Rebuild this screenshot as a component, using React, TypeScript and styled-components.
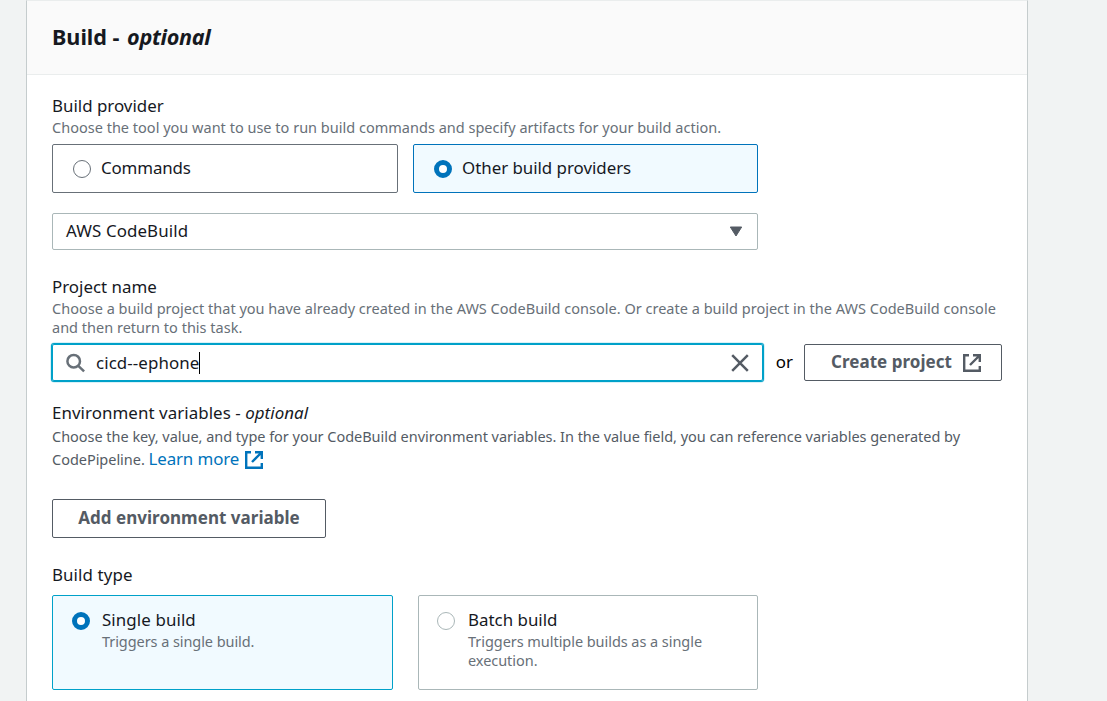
import React from "react";
import styled, { createGlobalStyle } from "styled-components";

const GlobalStyle = createGlobalStyle`
  *, *::before, *::after { box-sizing: border-box; }
  body {
    margin: 0;
    background: #f1f3f3;
    color: #16191f;
    font-family: "Noto Sans", "Open Sans", sans-serif;
    font-size: 16.9px;
    line-height: 23px;
  }
  button, input { font: inherit; color: inherit; }
`;

const Page = styled.main`
  height: 701px;
  overflow: hidden;
  padding: 0 79px 0 26px;
`;

const Container = styled.section`
  height: 760px;
  background: #ffffff;
  border: 1px solid #eaeded;
  border-left-color: #c5cccd;
  border-right-color: #c5cccd;
`;

const Header = styled.header`
  display: flex;
  align-items: center;
  height: 74px;
  padding: 0 25px 3px;
  background: #fafafa;
  border-bottom: 1px solid #eaeded;
`;

const Title = styled.h2`
  margin: 0;
  font-size: 21.6px;
  line-height: 29px;
  font-weight: 700;

  em {
    margin-left: 2px;
    letter-spacing: -0.3px;
  }
`;

const Body = styled.div`
  padding: 19px 25px 0;
`;

const Field = styled.section<{ $gap?: number }>`
  margin-top: ${(p) => p.$gap ?? 0}px;
`;

const Label = styled.div<{ $track?: number }>`
  letter-spacing: ${(p) => p.$track ?? 0}px;
`;

const Hint = styled.p<{ $track?: number }>`
  margin: 1px 0 0;
  font-size: 14.5px;
  line-height: 19px;
  color: #687078;
  letter-spacing: ${(p) => p.$track ?? 0.01}px;
`;

const Description = styled.p`
  margin: 0;
  padding-top: 1px;
  font-size: 14.5px;
  line-height: 23px;
  color: #545b64;
  letter-spacing: -0.03px;
`;

const Link = styled.a`
  display: inline-flex;
  align-items: center;
  gap: 6px;
  height: 21px;
  vertical-align: top;
  font-size: 16.9px;
  letter-spacing: -0.12px;
  color: #0073bb;
  text-decoration: none;

  svg {
    margin-top: 2px;
  }
`;

const ProviderTiles = styled.div`
  display: grid;
  grid-template-columns: 346px 345px;
  gap: 15px;
  margin-top: 7px;
`;

const BuildTypeTiles = styled.div`
  display: grid;
  grid-template-columns: 341px 340px;
  gap: 25px;
  margin-top: 9px;
`;

const Tile = styled.label<{ $height: number; $gap: number; $line: string; $selected?: boolean; $inset: string }>`
  display: flex;
  align-items: flex-start;
  gap: ${(p) => p.$gap}px;
  height: ${(p) => p.$height}px;
  padding: ${(p) => p.$inset};
  border: 1px solid ${(p) => p.$line};
  border-radius: 2px;
  background: ${(p) => (p.$selected ? "#f1faff" : "#ffffff")};
`;

const TileText = styled.div`
  flex: 1;
`;

const Radio = styled.span<{ $checked?: boolean; $line?: string }>`
  flex: none;
  width: 18px;
  height: 18px;
  margin-top: 4px;
  border-radius: 50%;
  background: #ffffff;
  border: ${(p) => (p.$checked ? "5.5px solid #0073bb" : `1.25px solid ${p.$line}`)};
`;

const Select = styled.div`
  display: flex;
  align-items: center;
  justify-content: space-between;
  width: 706px;
  height: 37px;
  margin-top: 20px;
  padding: 0 14px 2px 13px;
  border: 1px solid #aab7b8;
  border-radius: 2px;

  svg {
    margin-top: 2px;
  }
`;

const SearchRow = styled.div`
  display: flex;
  align-items: center;
  margin-top: 7px;
  height: 37px;
`;

const SearchBox = styled.div`
  display: flex;
  align-items: center;
  width: 711px;
  height: 37px;
  padding: 0 12px 0 13px;
  border: 1px solid #00a1c9;
  border-radius: 2px;
  box-shadow: 0 0 0 1px #00a1c9, 0 0 0 1.5px rgba(0, 161, 201, 0.3);
`;

const Query = styled.span`
  margin-left: 10px;
  letter-spacing: 0.08px;
`;

const Caret = styled.span`
  width: 1px;
  height: 22px;
  margin-right: auto;
  background: #000000;
`;

const Or = styled.span`
  margin: 0 11px 0 13px;
  padding-bottom: 2px;
  color: #000000;
`;

const Button = styled.button<{ $width: number; $height: number; $shift?: number }>`
  display: inline-flex;
  align-items: center;
  justify-content: center;
  gap: 11px;
  width: ${(p) => p.$width}px;
  height: ${(p) => p.$height}px;
  padding: 0 0 2px ${(p) => p.$shift ?? 0}px;
  border: 1px solid #545b64;
  border-radius: 2px;
  background: #ffffff;
  color: #545b64;
  font-size: 17px;
  letter-spacing: 0.03px;
  font-weight: 700;

  svg {
    margin-top: 3px;
  }
`;

const Icon = styled.svg`
  display: block;
  flex: none;
`;

const External = () => (
  <Icon width="18" height="18" viewBox="0 0 18 18" fill="none" stroke="currentColor" strokeWidth="2.4">
    <path d="M6 1.2H1.2v15.6h15.6V12M10 1.2h6.8V8M7 11L16.5 1.5" />
  </Icon>
);

export default function App() {
  return (
    <>
      <GlobalStyle />
      <Page>
        <Container>
          <Header>
            <Title>
              Build - <em>optional</em>
            </Title>
          </Header>
          <Body>
            <Field>
              <Label>Build provider</Label>
              <Hint>Choose the tool you want to use to run build commands and specify artifacts for your build action.</Hint>
              <ProviderTiles>
                <Tile $height={49} $gap={10} $line="#687078" $inset="11px 20px 0">
                  <Radio $line="#687078" />
                  <TileText>
                    <Label $track={-0.15}>Commands</Label>
                  </TileText>
                </Tile>
                <Tile $height={49} $gap={10} $line="#0073bb" $inset="11px 20px 0" $selected>
                  <Radio $checked />
                  <TileText>
                    <Label $track={-0.03}>Other build providers</Label>
                  </TileText>
                </Tile>
              </ProviderTiles>
              <Select>
                <Label $track={0.1}>AWS CodeBuild</Label>
                <Icon width="14" height="11" viewBox="0 0 14 11" fill="#545b64" stroke="#545b64" strokeLinejoin="round">
                  <path d="M1.3 1h11.4L7 10z" />
                </Icon>
              </Select>
            </Field>
            <Field $gap={25}>
              <Label>Project name</Label>
              <Hint>
                Choose a build project that you have already created in the AWS CodeBuild console. Or create a build project in the AWS CodeBuild console and then return to this task.
              </Hint>
              <SearchRow>
                <SearchBox>
                  <Icon width="20" height="20" viewBox="0 0 20 20" fill="none" stroke="#687078" strokeWidth="2.5">
                    <circle cx="7.7" cy="8.2" r="6.3" />
                    <path d="M12.3 12.8l5.8 5.6" />
                  </Icon>
                  <Query>cicd--ephone</Query>
                  <Caret />
                  <Icon width="20" height="20" viewBox="0 0 20 20" fill="none" stroke="#545b64" strokeWidth="2.5">
                    <path d="M2.2 2.2l15.6 15.6M17.8 2.2L2.2 17.8" />
                  </Icon>
                </SearchBox>
                <Or>or</Or>
                <Button $width={198} $height={37} $shift={6}>
                  Create project
                  <External />
                </Button>
              </SearchRow>
            </Field>
            <Field $gap={20}>
              <Label $track={0.06}>
                Environment variables - <em>optional</em>
              </Label>
              <Description>
                Choose the key, value, and type for your CodeBuild environment variables. In the value field, you can reference variables generated by
                <br />
                CodePipeline.{" "}
                <Link>
                  Learn more
                  <External />
                </Link>
              </Description>
            </Field>
            <Field $gap={28}>
              <Button $width={274} $height={39}>
                Add environment variable
              </Button>
            </Field>
            <Field $gap={25}>
              <Label $track={0.1}>Build type</Label>
              <BuildTypeTiles>
                <Tile $height={95} $gap={12} $line="#00a1c9" $inset="12px 19px 0" $selected>
                  <Radio $checked />
                  <TileText>
                    <Label $track={0.1}>Single build</Label>
                    <Hint $track={-0.07}>Triggers a single build.</Hint>
                  </TileText>
                </Tile>
                <Tile $height={95} $gap={13} $line="#aab7b8" $inset="12px 18px 0">
                  <Radio $line="#aab7b8" />
                  <TileText>
                    <Label>Batch build</Label>
                    <Hint $track={-0.05}>Triggers multiple builds as a single execution.</Hint>
                  </TileText>
                </Tile>
              </BuildTypeTiles>
            </Field>
          </Body>
        </Container>
      </Page>
    </>
  );
}
